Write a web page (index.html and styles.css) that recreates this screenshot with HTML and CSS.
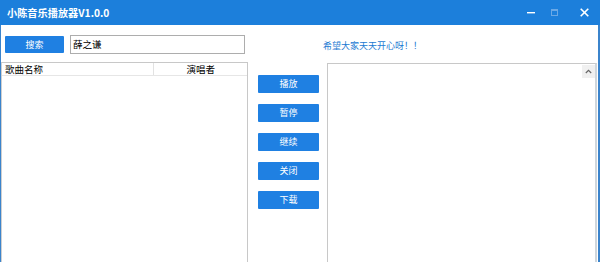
FILE: index.html
```html
<!DOCTYPE html>
<html lang="zh">
<head>
<meta charset="utf-8">
<title>小陈音乐播放器V1.0.0</title>
<link rel="stylesheet" href="styles.css">
</head>
<body>
<div class="window">
  <div class="titlebar">
    <span class="title">小陈音乐播放器V1.0.0</span>
    <div class="controls">
      <span class="ctl ctl-min"><svg width="8" height="2" viewBox="0 0 8 2"><rect width="8" height="1.4" fill="#fff"/></svg></span>
      <span class="ctl ctl-max"><svg width="7" height="7" viewBox="0 0 7 7"><rect x="0.5" y="0.5" width="6" height="6" fill="none" stroke="#6aa8e6"/><rect x="0.5" y="0.5" width="6" height="1.5" fill="#6aa8e6"/></svg></span>
      <span class="ctl ctl-close"><svg width="9" height="9" viewBox="0 0 9 9"><path d="M0.7 0.7L8.3 8.3M8.3 0.7L0.7 8.3" stroke="#fff" stroke-width="1.6"/></svg></span>
    </div>
  </div>
  <div class="main">
    <div class="col-left">
      <div class="search-row">
        <button class="btn btn-search">搜索</button>
        <div class="input">薛之谦</div>
      </div>
      <div class="list">
        <div class="list-head">
          <div class="th th-name">歌曲名称</div>
          <div class="th th-singer">演唱者</div>
        </div>
      </div>
    </div>
    <div class="col-mid">
      <button class="btn">播放</button>
      <button class="btn">暂停</button>
      <button class="btn">继续</button>
      <button class="btn">关闭</button>
      <button class="btn">下载</button>
    </div>
    <div class="col-right">
      <div class="hello">希望大家天天开心呀！！</div>
      <div class="textbox">
        <div class="scrollbar">
          <div class="sb-up"><svg width="7" height="5" viewBox="0 0 7 5"><path d="M0.8 4L3.5 1.3L6.2 4" fill="none" stroke="#666" stroke-width="1.2"/></svg></div>
        </div>
      </div>
    </div>
  </div>
</div>
</body>
</html>
```

FILE: styles.css
```css
html, body {
  margin: 0;
  padding: 0;
  background: #ffffff;
}
body {
  font-family: "Noto Sans CJK SC", "Noto Sans", sans-serif;
  width: 600px;
  height: 262px;
  overflow: hidden;
}
.window {
  width: 600px;
  height: 262px;
  display: flex;
  flex-direction: column;
}
.titlebar {
  height: 25px;
  flex: none;
  background: #1c7fdb;
  display: flex;
  align-items: center;
  justify-content: space-between;
  padding-left: 7px;
}
.title {
  color: #ffffff;
  font-size: 10.2px;
  font-weight: bold;
  line-height: 25px;
}
.controls {
  display: flex;
  align-items: center;
  height: 25px;
}
.ctl {
  display: flex;
  align-items: center;
  justify-content: center;
  height: 25px;
}
.ctl-min { width: 8px; margin-right: 16px; }
.ctl-max { width: 7px; margin-right: 22px; }
.ctl-close { width: 9px; margin-right: 11px; }
.main {
  flex: 1;
  display: flex;
  border-left: 1px solid #3b84cc;
  border-right: 2px solid #3b84cc;
  min-height: 0;
}
.col-left {
  width: 247px;
  flex: none;
  display: flex;
  flex-direction: column;
  padding-top: 10px;
}
.search-row {
  display: flex;
  align-items: center;
  height: 19px;
}
.btn {
  display: block;
  border: none;
  padding: 0;
  margin: 0;
  background: #1f80e2;
  color: #ffffff;
  font-family: "Noto Sans CJK SC", "Noto Sans", sans-serif;
  font-size: 9px;
  line-height: 18px;
  height: 18px;
  width: 61px;
  border-radius: 1px;
  text-align: center;
}
.btn-search {
  width: 59px;
  height: 17px;
  line-height: 17px;
  margin-left: 4px;
}
.input {
  margin-left: 6px;
  width: 171px;
  height: 17px;
  border: 1px solid #adadad;
  font-size: 9.5px;
  line-height: 17px;
  padding-left: 2px;
  color: #000;
  box-sizing: content-box;
}
.list {
  margin-top: 8px;
  flex: 1;
  border: 1px solid #c8c8c8;
  border-bottom: none;
  border-left-color: #cfcfcf;
}
.list-head {
  display: flex;
  height: 12px;
  border-bottom: 1px solid #e6e6e6;
  font-size: 9.5px;
  line-height: 12px;
  color: #000;
}
.th-name {
  width: 152px;
  padding-left: 3px;
  box-sizing: border-box;
  border-right: 1px solid #e2e2e2;
}
.th-singer {
  flex: 1;
  text-align: right;
  padding-right: 32px;
}
.col-mid {
  width: 74px;
  flex: none;
  display: flex;
  flex-direction: column;
  gap: 11px;
  padding-top: 50px;
  padding-left: 10px;
  box-sizing: border-box;
}
.col-right {
  flex: 1;
  display: flex;
  flex-direction: column;
}
.hello {
  color: #1d7ad2;
  font-size: 9px;
  line-height: 12px;
  margin-top: 15px;
  margin-left: 1px;
  height: 12px;
}
.textbox {
  margin-top: 11px;
  margin-left: 5px;
  margin-right: 1px;
  flex: 1;
  border: 1px solid #c8c8c8;
  border-bottom: none;
  border-right: 2px solid #cfd6dc;
  display: flex;
  justify-content: flex-end;
}
.scrollbar {
  width: 13px;
  background: #ffffff;
}
.sb-up {
  height: 13px;
  background: #f0f0f0;
  display: flex;
  align-items: center;
  justify-content: center;
  margin-top: 1px;
}
```
